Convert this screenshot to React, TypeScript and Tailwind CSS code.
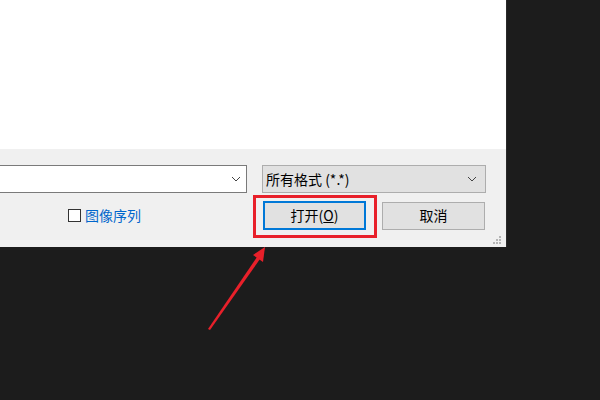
import React from "react";

const font = { fontFamily: '"Microsoft YaHei", "Noto Sans CJK SC", "Noto Sans", sans-serif' };

function Chevron() {
    return (
        <svg width="10" height="6" viewBox="0 0 10 6" className="text-[#444]">
            <path d="M1 1 L5 5 L9 1" fill="none" stroke="currentColor" strokeWidth="1" />
        </svg>
    );
}

export default function App() {
    return (
        <div className="relative w-[600px] h-[400px] bg-[#1c1c1c] overflow-hidden" style={font}>
            <div className="flex flex-col w-[507px] h-[247px] border-r border-[#2a2a2a]">
                <div className="h-[149px] bg-white" />
                <div className="relative flex-1 bg-[#f0f0f0] pt-[16px]">
                    <div className="flex items-center">
                        <div className="w-[247px] h-[28px] bg-white border border-[#7a7a7a] border-l-0 flex items-center justify-end pr-[5px]">
                            <Chevron />
                        </div>
                        <div className="ml-[15px] w-[224px] h-[28px] bg-[#e1e1e1] border border-[#adadad] flex items-center justify-between pl-[3px] pr-[8px] text-[14px] text-black">
                            <span>所有格式 (*.*)</span>
                            <Chevron />
                        </div>
                    </div>
                    <div className="flex items-center mt-[8px]">
                        <div className="w-[263px] flex items-center pl-[68px]">
                            <div className="w-[13px] h-[13px] border border-[#333] bg-white" />
                            <span className="ml-[4px] text-[14px] text-[#0066cc]">图像序列</span>
                        </div>
                        <button className="w-[103px] h-[29px] bg-[#e1e1e1] border-2 border-[#0078d7] text-[14px] text-black">
                            打开(<span className="underline">O</span>)
                        </button>
                        <button className="ml-[16px] w-[103px] h-[28px] bg-[#e1e1e1] border border-[#adadad] text-[14px] text-black">
                            取消
                        </button>
                    </div>
                    <svg className="absolute right-[4px] bottom-[2px]" width="9" height="9" viewBox="0 0 9 9">
                        <g fill="#b5b5b5">
                            <rect x="6" y="0" width="2" height="2" />
                            <rect x="3" y="3" width="2" height="2" />
                            <rect x="6" y="3" width="2" height="2" />
                            <rect x="0" y="6" width="2" height="2" />
                            <rect x="3" y="6" width="2" height="2" />
                            <rect x="6" y="6" width="2" height="2" />
                        </g>
                    </svg>
                </div>
            </div>
            {/* annotation */}
            <div className="absolute left-[253px] top-[195px] w-[124px] h-[43px] border-[3px] border-[#e8202a]" />
            <svg className="absolute left-0 top-0" width="600" height="400" viewBox="0 0 600 400">
                <polygon points="208,329 257,257 260,259 210,330" fill="#e8202a" />
                <polygon points="265,247 253,255 263,262" fill="#e8202a" />
            </svg>
        </div>
    );
}
